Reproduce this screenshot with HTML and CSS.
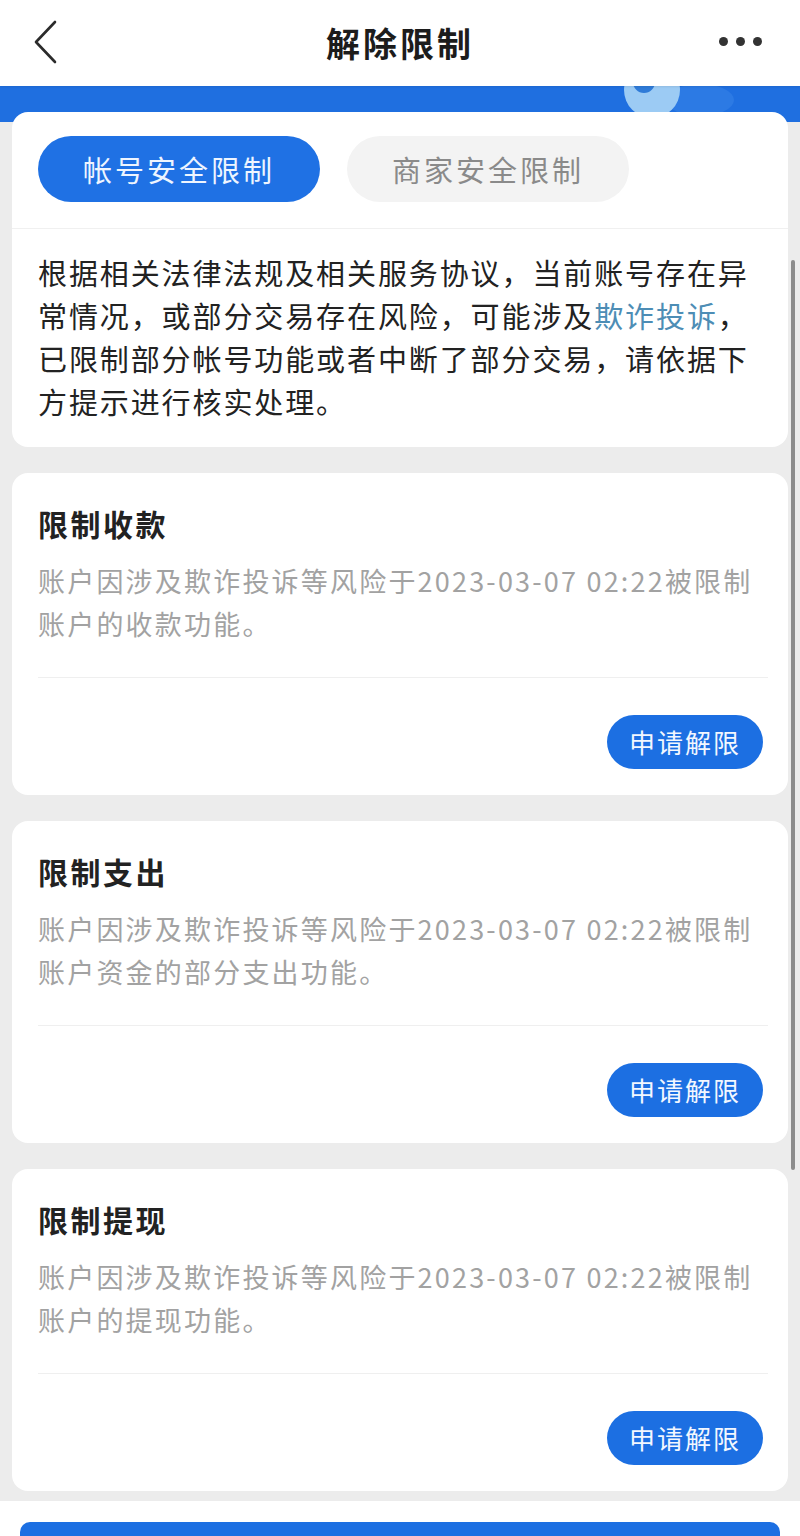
FILE: index.html
```html
<!DOCTYPE html>
<html lang="zh-CN">
<head>
<meta charset="utf-8">
<title>解除限制</title>
<link rel="stylesheet" href="styles.css">
</head>
<body>
<div class="page">
  <header class="topbar">
    <svg class="back" width="30" height="46" viewBox="0 0 30 46" aria-hidden="true">
      <polyline points="23,3 4,23 23,43" fill="none" stroke="#2b2b2b" stroke-width="2.6" stroke-linecap="round" stroke-linejoin="round"/>
    </svg>
    <h1 class="title">解除限制</h1>
    <div class="more" aria-label="更多"><span></span><span></span><span></span></div>
  </header>

  <main class="main">
    <svg class="deco" width="200" height="40" viewBox="0 0 200 40" aria-hidden="true">
      <ellipse cx="100" cy="14" rx="34" ry="16" fill="#3a86e8" opacity="0.5"/>
      <circle cx="52" cy="4" r="28" fill="#9ccbf4"/>
      <circle cx="44" cy="-4" r="11" fill="#2f7bd8"/>
    </svg>

    <section class="card intro">
      <div class="tabs">
        <div class="tab active">帐号安全限制</div>
        <div class="tab">商家安全限制</div>
      </div>
      <div class="divider full"></div>
      <p class="intro-text">根据相关法律法规及相关服务协议，当前账号存在异常情况，或部分交易存在风险，可能涉及<span class="link">欺诈投诉</span>，已限制部分帐号功能或者中断了部分交易，请依据下方提示进行核实处理。</p>
    </section>

    <section class="card item">
      <h2 class="item-title">限制收款</h2>
      <p class="item-desc">账户因涉及欺诈投诉等风险于2023-03-07 02:22被限制账户的收款功能。</p>
      <div class="divider"></div>
      <div class="actions"><button class="btn">申请解限</button></div>
    </section>

    <section class="card item">
      <h2 class="item-title">限制支出</h2>
      <p class="item-desc">账户因涉及欺诈投诉等风险于2023-03-07 02:22被限制账户资金的部分支出功能。</p>
      <div class="divider"></div>
      <div class="actions"><button class="btn">申请解限</button></div>
    </section>

    <section class="card item">
      <h2 class="item-title">限制提现</h2>
      <p class="item-desc">账户因涉及欺诈投诉等风险于2023-03-07 02:22被限制账户的提现功能。</p>
      <div class="divider"></div>
      <div class="actions"><button class="btn">申请解限</button></div>
    </section>
  </main>

  <footer class="footer">
    <div class="footer-btn"></div>
  </footer>

  <div class="scrollbar"></div>
</div>
</body>
</html>
```

FILE: styles.css
```css
html, body {
  margin: 0;
  padding: 0;
  height: 1536px;
  overflow: hidden;
}

body {
  background: #ececec;
  font-family: "Noto Sans CJK SC", "Noto Sans", sans-serif;
  color: #222;
}

.page {
  position: relative;
  width: 800px;
  min-height: 1536px;
  background: #ececec;
}

.topbar {
  height: 86px;
  background: #fff;
  display: flex;
  align-items: center;
  justify-content: space-between;
  padding: 0 38px 0 32px;
  box-sizing: border-box;
  position: relative;
  z-index: 2;
  box-shadow: 0 1px 2px rgba(0,0,0,0.08);
}

.back {
  display: block;
  margin-top: -2px;
}

.title {
  position: absolute;
  left: 0;
  right: 0;
  text-align: center;
  margin: 0;
  font-size: 34px;
  font-weight: 700;
  letter-spacing: 3px;
  color: #1c1c1c;
  line-height: 86px;
  pointer-events: none;
}

.more {
  display: flex;
  gap: 8px;
  margin-top: -4px;
}

.more span {
  width: 9px;
  height: 9px;
  border-radius: 50%;
  background: #333;
}

.main {
  position: relative;
  padding-top: 26px;
  background: linear-gradient(#1f6fe0 0, #1f6fe0 36px, #ececec 36px);
  display: flex;
  flex-direction: column;
  gap: 26px;
}

.deco {
  position: absolute;
  left: 600px;
  top: 0;
  z-index: 0;
}

.card {
  position: relative;
  z-index: 1;
  margin: 0 12px;
  background: #fff;
  border-radius: 16px;
}

.intro {
  padding: 24px 26px 24px 26px;
}

.tabs {
  display: flex;
  gap: 27px;
}

.tab {
  width: 282px;
  height: 66px;
  border-radius: 33px;
  background: #f3f3f3;
  color: #8a8a8a;
  font-size: 29px;
  letter-spacing: 3px;
  display: flex;
  align-items: center;
  justify-content: center;
}

.tab.active {
  background: #1f71e4;
  color: #eef5ff;
}

.divider {
  height: 1px;
  background: #efefef;
  margin-right: -5px;
}

.divider.full {
  margin: 26px -26px 0 -26px;
  background: #f0f0f0;
}

.intro-text {
  margin: 22px 0 0 0;
  font-size: 29px;
  line-height: 43px;
  letter-spacing: 1.9px;
  color: #222;
  width: 724px;
}

.link {
  color: #4d8db5;
}

.item {
  padding: 30px 25px 26px 26px;
}

.item-title {
  margin: 0;
  font-size: 30px;
  font-weight: 700;
  line-height: 40px;
  letter-spacing: 2.5px;
  color: #222;
}

.item-desc {
  margin: 16px 0 32px 0;
  font-size: 27px;
  line-height: 43px;
  letter-spacing: 2.2px;
  color: #a2a2a2;
  width: 735px;
}

.actions {
  display: flex;
  justify-content: flex-end;
  margin-top: 37px;
}

.btn {
  height: 54px;
  padding: 0 22px;
  border: none;
  border-radius: 27px;
  background: #1c6fe2;
  color: #f2f7ff;
  font-family: "Noto Sans CJK SC", "Noto Sans", sans-serif;
  font-size: 26px;
  letter-spacing: 2px;
  line-height: 54px;
}

.footer {
  margin-top: 10px;
  background: #fff;
  padding: 21px 20px 0 20px;
}

.footer-btn {
  height: 80px;
  background: #1c6fe2;
  border-radius: 10px 10px 0 0;
}

.scrollbar {
  position: absolute;
  right: 5px;
  top: 260px;
  width: 4px;
  height: 910px;
  border-radius: 2px;
  background: #8c8c8c;
  z-index: 3;
}
```
